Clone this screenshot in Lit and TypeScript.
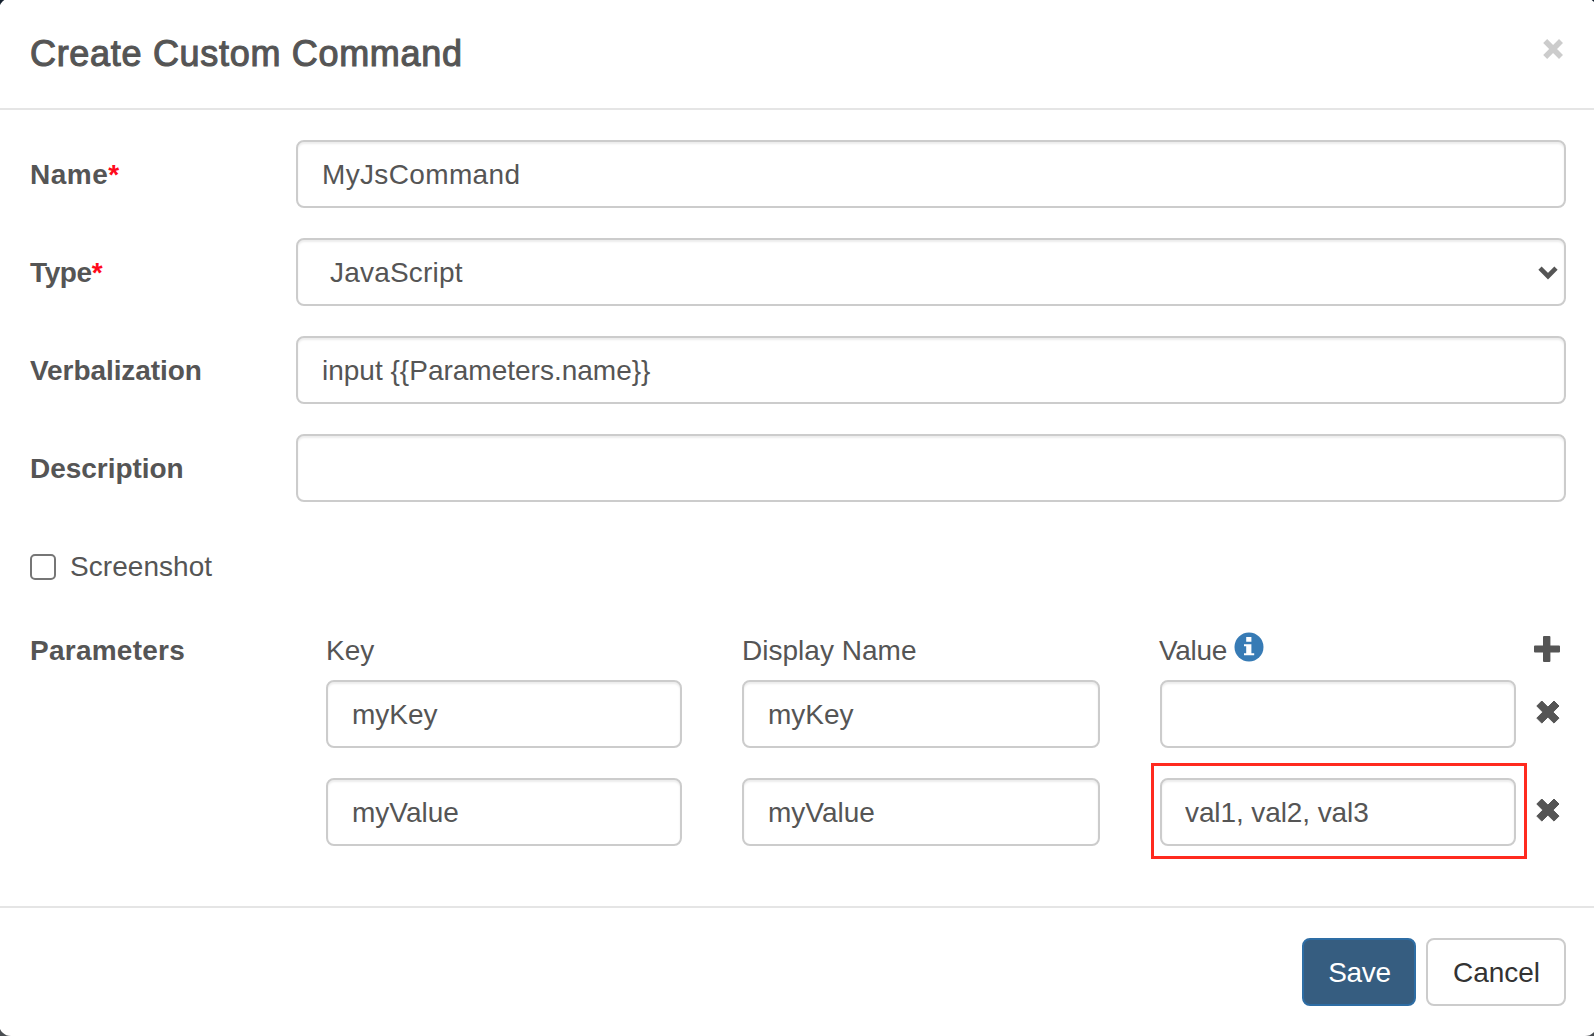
import { LitElement, html, css } from "lit";
import { customElement, state } from "lit/decorators.js";

interface Param {
  key: string;
  name: string;
  value: string;
  marked?: boolean;
}

@customElement("app-root")
export class AppRoot extends LitElement {
  @state() private params: Param[] = [
    { key: "myKey", name: "myKey", value: "" },
    { key: "myValue", name: "myValue", value: "val1, val2, val3", marked: true },
  ];

  static styles = css`
    :host {
      display: block;
      width: 1594px;
      height: 1036px;
      overflow: hidden;
      background: linear-gradient(#14202e, #4a4e52);
      font-family: "Liberation Sans", Arial, sans-serif;
      font-size: 28px;
      line-height: 40px;
      color: #555;
    }
    * {
      box-sizing: border-box;
    }
    .modal {
      width: 1598px;
      height: 1038px;
      margin: -2px 0 0 -1px;
      padding: 2px 3px 0 1px;
      border-radius: 12px;
      background: #fff;
      display: flex;
      flex-direction: column;
    }
    .header {
      height: 110px;
      padding: 30px 30px 0;
      border-bottom: 2px solid #e5e5e5;
      display: flex;
      justify-content: space-between;
    }
    .title {
      margin: 0;
      font-size: 36px;
      font-weight: 400;
      line-height: 48px;
      letter-spacing: 0.69px;
      -webkit-text-stroke: 1.1px #555;
    }
    .icon {
      display: block;
      flex: none;
    }
    .close {
      margin-top: 8px;
    }
    .body {
      height: 796px;
      padding: 30px 28px 0 30px;
    }
    .row {
      display: grid;
      grid-template-columns: 266px 1fr;
      height: 68px;
      align-items: center;
      margin-bottom: 30px;
    }
    .label {
      font-weight: 700;
    }
    .row .label {
      padding-top: 2px;
    }
    .star {
      color: #ff0a1c;
      letter-spacing: 0;
    }
    .l-name { letter-spacing: 0.5px; }
    .l-type { letter-spacing: -0.4px; }
    .l-verb { letter-spacing: -0.07px; }
    .l-desc { letter-spacing: -0.03px; }
    .l-par { letter-spacing: 0.25px; }
    .i-name { letter-spacing: 0.35px; }
    .i-type { letter-spacing: 0.2px; }
    .i-val { letter-spacing: -0.1px; }
    .control {
      display: block;
      width: 100%;
      height: 68px;
      margin: 0;
      padding: 2px 24px 0;
      border: 2px solid #ccc;
      border-radius: 8px;
      background: #fff;
      box-shadow: inset 0 2px 2px rgba(0, 0, 0, 0.075);
      font-family: inherit;
      font-size: 28px;
      color: #555;
      outline: none;
      appearance: none;
    }
    .picker {
      display: grid;
    }
    .picker > * {
      grid-area: 1 / 1;
    }
    .picker .control {
      padding: 0 32px;
    }
    .chevron {
      justify-self: end;
      align-self: center;
      margin: 1px 8px 0 0;
      pointer-events: none;
    }
    .check {
      display: flex;
      align-items: center;
      height: 40px;
      margin-top: 45px;
      letter-spacing: 0.05px;
    }
    .box {
      appearance: none;
      width: 26px;
      height: 26px;
      margin: 0 14px 0 0;
      border: 2px solid #767676;
      border-radius: 5px;
      background: #fff;
    }
    .params {
      display: grid;
      grid-template-columns: 296px 1fr;
      margin-top: 43px;
    }
    .params > .label,
    .heads > span {
      padding-top: 1px;
    }
    .line {
      display: grid;
      grid-template-columns: 356px 358px 356px 26px;
      column-gap: 60px;
    }
    .line .icon {
      margin-left: -42px;
    }
    .heads {
      height: 50px;
    }
    .heads .icon {
      margin-top: 6px;
    }
    .values {
      height: 68px;
      margin-bottom: 30px;
    }
    .values .icon {
      margin-top: 20px;
    }
    .value-head {
      display: flex;
      margin-left: -1px;
      letter-spacing: -0.3px;
    }
    .value-head .icon {
      margin: 1px 0 0 7px;
    }
    .h-disp { letter-spacing: 0.02px; }
    .cell {
      position: relative;
    }
    .cell .control {
      padding-left: 23px;
    }
    .marker {
      position: absolute;
      inset: -15px -11px -13px -9px;
      border: 3px solid #ff2a1f;
      pointer-events: none;
    }
    .footer {
      height: 130px;
      padding: 30px 28px 0;
      border-top: 2px solid #e5e5e5;
      display: flex;
      justify-content: flex-end;
      gap: 10px;
    }
    .btn {
      height: 68px;
      padding: 2px 0 0 1px;
      border: 2px solid #ccc;
      border-radius: 8px;
      background: #fff;
      color: #333;
      font-family: inherit;
      font-size: 28px;
    }
    .save {
      width: 114px;
      border-color: #2e6da4;
      background: #365d80;
      color: #fff;
      letter-spacing: -0.3px;
    }
    .cancel {
      width: 140px;
      letter-spacing: 0;
    }
  `;

  private row(label: string, cls: string, required: boolean, control: unknown) {
    return html`<div class="row">
      <label class="label ${cls}">${label}${required ? html`<span class="star">*</span>` : ""}</label>
      ${control}
    </div>`;
  }

  private paramLine(p: Param) {
    return html`<div class="line values">
      <input class="control" .value=${p.key} />
      <input class="control" .value=${p.name} />
      <div class="cell">
        <input class="control i-val" .value=${p.value} />
        ${p.marked ? html`<div class="marker"></div>` : ""}
      </div>
      <svg class="icon" width="26" height="24" viewBox="0 0 26 24">
        <path
          d="M7.8 1L13.9 7.1L20 1L25 6L19 12.1L25 18.1L20 23.1L13.9 17.1L7.8 23.1L2.8 18.1L8.8 12.1L2.8 6Z"
          fill="#555"
          stroke="#555"
          stroke-width="1"
          stroke-linejoin="round"
        />
      </svg>
    </div>`;
  }

  render() {
    return html`<div class="modal">
      <div class="header">
        <h4 class="title">Create Custom Command</h4>
        <svg class="icon close" width="22" height="22" viewBox="0 0 22 22">
          <path d="M3.2 3.1L19 18.9M19 3.1L3.2 18.9" stroke="#ccc" stroke-width="5.6" fill="none" />
        </svg>
      </div>
      <div class="body">
        ${this.row("Name", "l-name", true, html`<input class="control i-name" .value=${"MyJsCommand"} />`)}
        ${this.row(
          "Type",
          "l-type",
          true,
          html`<div class="picker">
            <select class="control i-type">
              <option>JavaScript</option>
            </select>
            <svg class="icon chevron" width="20" height="14" viewBox="0 0 20 14">
              <path d="M2 2.2L10 10.2L18 2.2" stroke="#555" stroke-width="4.6" fill="none" />
            </svg>
          </div>`
        )}
        ${this.row("Verbalization", "l-verb", false, html`<input class="control" .value=${"input {{Parameters.name}}"} />`)}
        ${this.row("Description", "l-desc", false, html`<input class="control" />`)}
        <label class="check"><input class="box" type="checkbox" />Screenshot</label>
        <div class="params">
          <span class="label l-par">Parameters</span>
          <div>
            <div class="line heads">
              <span>Key</span>
              <span class="h-disp">Display Name</span>
              <span class="value-head">
                Value
                <svg class="icon" width="30" height="30" viewBox="0 0 30 30">
                  <circle cx="15" cy="15" r="14.5" fill="#377bb5" />
                  <path d="M12.2 5H17.4V9.8H12.2ZM10 12.2H17.4V21.2H20.2V23.2H10V21.2H12.2V14.2H10Z" fill="#fff" />
                </svg>
              </span>
              <svg class="icon" width="26" height="26" viewBox="0 0 26 26">
                <path
                  d="M10 0H15.4Q16.4 0 16.4 1V9.6H25Q26 9.6 26 10.6V15.6Q26 16.6 25 16.6H16.4V25Q16.4 26 15.4 26H10Q9 26 9 25V16.6H1Q0 16.6 0 15.6V10.6Q0 9.6 1 9.6H9V1Q9 0 10 0Z"
                  fill="#555"
                />
              </svg>
            </div>
            ${this.params.map((p) => this.paramLine(p))}
          </div>
        </div>
      </div>
      <div class="footer">
        <button class="btn save">Save</button>
        <button class="btn cancel">Cancel</button>
      </div>
    </div>`;
  }
}
